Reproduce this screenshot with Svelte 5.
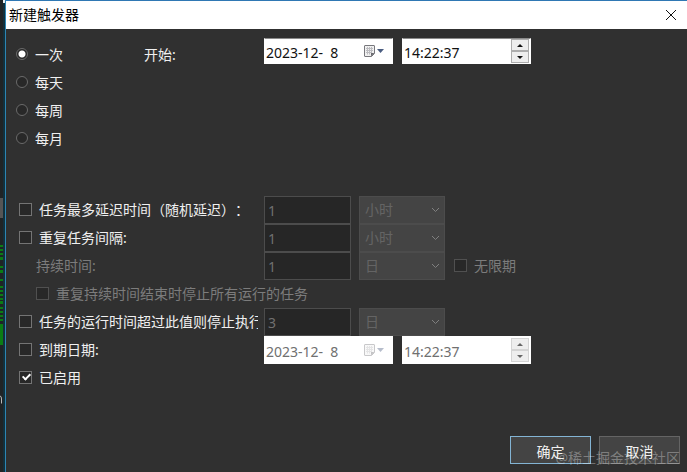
<script lang="ts">
	let frequency = $state('once');
	let enabled = $state(true);

	const frequencies = [
		{ id: 'once', label: '一次' },
		{ id: 'daily', label: '每天' },
		{ id: 'weekly', label: '每周' },
		{ id: 'monthly', label: '每月' }
	];

	// y, height of the lit lines of the editor behind the dialog
	const stripes = [
		[245, 2], [249, 2], [253, 2], [257, 3], [266, 2], [270, 3],
		[279, 2], [286, 2], [290, 2], [294, 2], [298, 2], [301, 3],
		[307, 2], [311, 2], [315, 2], [319, 2], [324, 21]
	];
</script>

{#snippet dateTime(id: string, label: string, disabled: boolean)}
	<div class="box date" class:off={disabled}>
		<input id={id} type="text" value="2023-12-  8" aria-label="{label} 日期" {disabled} />
		<button type="button" class="calendar" aria-label="日历" {disabled}>
			<svg width="22" height="14" viewBox="0 0 22 14">
				<path d="M2 1.500h9q.5 0 .5.5v7.500l-3 3H2q-.5 0-.5-.5V2q0-.5.5-.5z" fill="#f0f0f0" stroke="#77777c" />
				<path d="M3 4.500h7M3 6.500h7M3 8.500h6M4.500 3v7.500M6.500 3v7.500M8.500 3v6" stroke="#bcbcc0" />
				<path d="M8 12.500v-3.500h3.500z" fill="#6b6b70" />
				<path d="M14 5h7l-3.500 4z" fill="#4a5c80" />
			</svg>
		</button>
	</div>
	<div class="box time" class:off={disabled}>
		<input type="text" value="14:22:37" aria-label="{label} 时间" {disabled} />
		<div class="spin">
			<button type="button" aria-label="增加" {disabled}>
				<svg width="6" height="3" viewBox="0 0 6 3"><path d="M0 3h6L3 0z" /></svg>
			</button>
			<button type="button" aria-label="减少" {disabled}>
				<svg width="6" height="3" viewBox="0 0 6 3"><path d="M0 0h6L3 3z" /></svg>
			</button>
		</div>
	</div>
{/snippet}

{#snippet amount(id: string, value: string, unit: string)}
	<input {id} class="amount" type="text" {value} aria-label="数值" disabled />
	<div class="unit">
		<select aria-label="单位" disabled>
			<option>{unit}</option>
		</select>
		<svg width="9" height="6" viewBox="0 0 9 6"><path d="M1 1l3.500 3.500L8 1" /></svg>
	</div>
{/snippet}

<div class="screen">
	<div class="behind">
		<svg width="5" height="472" viewBox="0 0 5 472">
			<rect x="3" width="2" height="472" fill="#13303c" />
			<rect x="3" width="2" height="3" fill="#e8eef2" />
			<rect y="198" width="3" height="20" fill="#555555" />
			{#each stripes as [y, h]}
				<rect {y} width="3" height={h} fill="#0b7d14" />
			{/each}
			<path d="M0 396q1.500 0 1.500 3v4.500" fill="none" stroke="#b8b8b8" />
		</svg>
	</div>

	<div class="dialog" role="dialog" aria-labelledby="title">
		<header>
			<h1 id="title">新建触发器</h1>
			<button type="button" class="close" aria-label="关闭">
				<svg width="12" height="12" viewBox="0 0 12 12"><path d="M1 1l10 10M11 1L1 11" /></svg>
			</button>
		</header>

		<form onsubmit={(e) => e.preventDefault()}>
			<section class="schedule">
				<div class="frequencies">
					{#each frequencies as f}
						<label class="row radio">
							<input type="radio" name="frequency" value={f.id} bind:group={frequency} />
							<span>{f.label}</span>
						</label>
					{/each}
				</div>
				<div class="row start">
					<label class="startLabel" for="start">开始:</label>
					{@render dateTime('start', '开始', false)}
				</div>
			</section>

			<section class="advanced">
				<div class="row">
					<label class="name"><input type="checkbox" /><span>任务最多延迟时间（随机延迟）：</span></label>
					{@render amount('delay', '1', '小时')}
				</div>
				<div class="row">
					<label class="name"><input type="checkbox" /><span>重复任务间隔:</span></label>
					{@render amount('interval', '1', '小时')}
				</div>
				<div class="row muted">
					<label class="name indent" for="duration">持续时间:</label>
					{@render amount('duration', '1', '日')}
					<label class="forever"><input type="checkbox" disabled /><span>无限期</span></label>
				</div>
				<div class="row muted">
					<label class="indent check"><input type="checkbox" disabled /><span>重复持续时间结束时停止所有运行的任务</span></label>
				</div>
				<div class="row">
					<label class="name"><input type="checkbox" /><span>任务的运行时间超过此值则停止执行</span></label>
					{@render amount('limit', '3', '日')}
				</div>
				<div class="row">
					<label class="name"><input type="checkbox" /><span>到期日期:</span></label>
					{@render dateTime('expire', '到期', true)}
				</div>
				<div class="row">
					<label class="name"><input type="checkbox" bind:checked={enabled} /><span>已启用</span></label>
				</div>
			</section>

			<footer>
				<button type="submit" class="action primary">确定</button>
				<button type="button" class="action">取消</button>
				<span class="watermark">@稀土掘金技术社区</span>
			</footer>
		</form>
	</div>
</div>

<style>
	:global(body) {
		margin: 0;
		background: #303030;
	}
	.screen {
		display: flex;
		min-height: 100vh;
		color: #f0f0f0;
		font: 14px/20px "Noto Sans", "Noto Sans CJK SC", sans-serif;
		text-spacing-trim: space-all;
	}
	input, button, select {
		box-sizing: border-box;
		margin: 0;
		padding: 0;
		font: inherit;
		color: inherit;
	}
	svg {
		display: block;
	}
	.behind {
		flex: none;
		width: 5px;
		background: #202426;
	}
	.dialog {
		flex: 1;
		min-width: 0;
		border-top: 1px solid #2f78b4;
		border-left: 1px solid #2c86b4;
	}
	header {
		display: flex;
		align-items: center;
		justify-content: space-between;
		height: 28px;
		padding: 0 10px 0 3px;
		background: #fff;
		color: #000;
	}
	h1 {
		margin: 0;
		font-size: 14px;
		font-weight: 400;
	}
	.close {
		border: 0;
		background: none;
	}
	.close path {
		fill: none;
		stroke: #111;
	}
	form {
		padding: 9px 7px 8px 10px;
	}
	.schedule {
		display: flex;
		align-items: flex-start;
		margin-bottom: 44px;
	}
	.frequencies {
		width: 128px;
		padding-top: 2px;
	}
	.row {
		display: flex;
		align-items: center;
		height: 28px;
		white-space: nowrap;
	}
	.start {
		height: 26px;
	}
	.radio {
		gap: 7px;
	}
	.radio span {
		padding-top: 2px;
	}
	.startLabel {
		width: 120px;
		padding-top: 8px;
	}
	input[type="radio"] {
		appearance: none;
		width: 12px;
		height: 12px;
		border: 1px solid #6a6a6a;
		border-radius: 50%;
		background: #282828;
	}
	input[type="radio"]:checked {
		background: radial-gradient(circle, #fff 3px, #282828 4px);
	}
	input[type="checkbox"] {
		appearance: none;
		flex: none;
		width: 13px;
		height: 13px;
		margin-bottom: 2px;
		border: 1px solid #747474;
		background: #282828;
	}
	input[type="checkbox"]:disabled {
		border-color: #505050;
	}
	input[type="checkbox"]:checked {
		position: relative;
	}
	input[type="checkbox"]:checked::after {
		content: "";
		position: absolute;
		left: 4px;
		top: 0;
		width: 3px;
		height: 6px;
		border: solid #fff;
		border-width: 0 2px 2px 0;
		transform: rotate(45deg);
	}
	.advanced {
		padding-left: 3px;
	}
	.name, .check, .forever {
		display: flex;
		align-items: center;
		gap: 7px;
	}
	.name {
		box-sizing: border-box;
		width: 239px;
		margin-right: 6px;
		overflow: hidden;
	}
	.indent {
		padding-left: 17px;
	}
	.muted {
		color: #7c7c7c;
	}
	.forever {
		margin-left: 9px;
	}
	.amount {
		width: 87px;
		height: 28px;
		padding: 0 3px;
		border: 1px solid #4c4c4c;
		background: #262626;
		color: #707070;
	}
	.unit {
		display: grid;
		align-items: center;
		width: 86px;
		height: 28px;
		margin-left: 8px;
	}
	.unit > * {
		grid-area: 1 / 1;
	}
	select {
		appearance: none;
		width: 100%;
		height: 28px;
		padding: 0 5px;
		border: 1px solid #4c4c4c;
		border-radius: 0;
		background: #444;
		color: #646464;
		opacity: 1;
	}
	.unit svg {
		justify-self: end;
		margin-right: 5px;
		pointer-events: none;
	}
	.unit path {
		fill: none;
		stroke: #808080;
	}
	.box {
		box-sizing: border-box;
		display: flex;
		align-items: center;
		width: 129px;
		height: 26px;
		background: #fff;
		border: 1px solid #fff;
		border-top-color: #8a8a8a;
		color: #111;
	}
	.box input {
		flex: 1;
		min-width: 0;
		height: 24px;
		padding: 2px 0 0 1px;
		border: 0;
		background: none;
	}
	.time {
		margin-left: 9px;
	}
	.calendar {
		margin-right: 7px;
		border: 0;
		background: none;
	}
	.spin {
		display: grid;
		margin-right: 1px;
	}
	.spin button {
		display: grid;
		place-items: center;
		width: 18px;
		height: 12px;
		border: 1px solid #adadad;
		background: #eee;
	}
	.spin path {
		fill: #111;
	}
	.box.off {
		height: 28px;
		border-color: #fff;
		color: #707070;
	}
	.off .calendar {
		opacity: 0.4;
	}
	.off .spin button {
		border-color: #d4d4d4;
	}
	.off .spin path {
		fill: #666;
	}
	footer {
		position: relative;
		display: flex;
		justify-content: flex-end;
		gap: 8px;
		margin-top: 44px;
	}
	.action {
		width: 81px;
		height: 28px;
		padding-top: 3px;
		border: 1px solid #646464;
		background: #444;
	}
	.primary {
		border-color: #83b4d4;
	}
	.watermark {
		position: absolute;
		right: 0;
		top: 12px;
		color: rgba(255, 255, 255, 0.32);
		pointer-events: none;
	}
</style>
